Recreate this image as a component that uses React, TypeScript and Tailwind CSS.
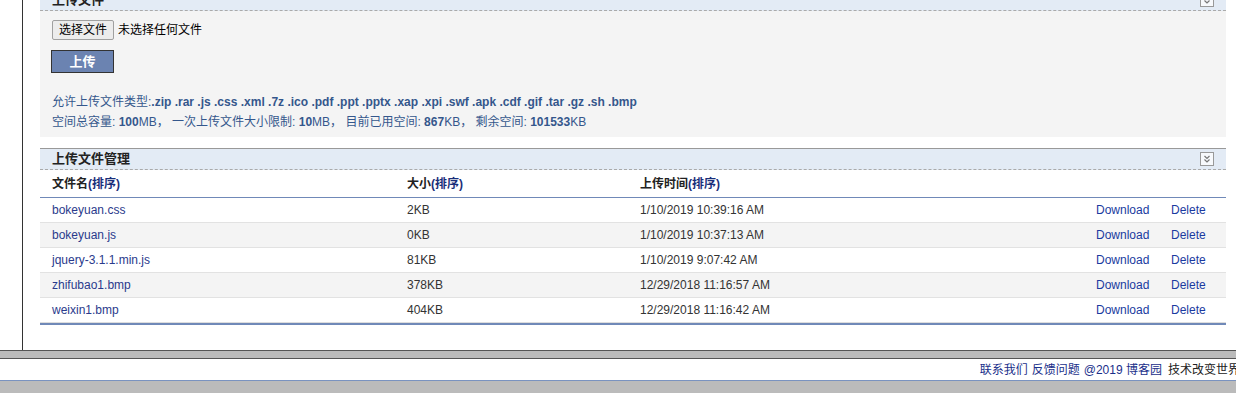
import React from 'react';

const FONT = '"Liberation Sans", Arial, "Noto Sans CJK SC", sans-serif';

const files = [
  { name: 'bokeyuan.css', size: '2KB', time: '1/10/2019 10:39:16 AM' },
  { name: 'bokeyuan.js', size: '0KB', time: '1/10/2019 10:37:13 AM' },
  { name: 'jquery-3.1.1.min.js', size: '81KB', time: '1/10/2019 9:07:42 AM' },
  { name: 'zhifubao1.bmp', size: '378KB', time: '12/29/2018 11:16:57 AM' },
  { name: 'weixin1.bmp', size: '404KB', time: '12/29/2018 11:16:42 AM' },
];

function CollapseIcon() {
  return (
    <span className="flex items-center justify-center w-[14px] h-[14px] border border-[#999] bg-[#f7f9fc]">
      <svg width="8" height="8" viewBox="0 0 8 8" fill="none" stroke="#777" strokeWidth="1.2">
        <path d="M1.5 1l2.5 2.5L6.5 1" />
        <path d="M1.5 4.5l2.5 2.5 2.5-2.5" />
      </svg>
    </span>
  );
}

function PanelHeader({ title, top = false }: { title: string; top?: boolean }) {
  return (
    <div
      className={`flex items-center justify-between h-[22px] pl-3 pr-[12px] bg-[#e3ebf5] border-b border-dashed border-[#aaa] ${top ? '' : 'border-t border-t-[#999]'}`}
      style={top ? undefined : { borderTopStyle: 'solid' }}
    >
      <span className="text-[13px] font-bold text-[#222]">{title}</span>
      <CollapseIcon />
    </div>
  );
}

export default function App() {
  return (
    <div className="h-[393px] overflow-hidden bg-white" style={{ fontFamily: FONT }}>
      <div className="flex h-[350px] overflow-hidden">
        <div className="w-[23px] shrink-0 border-r border-[#333]" />
        <div className="w-[1203px] pl-[17px] -mt-[11px]">
          {/* upload panel */}
          <PanelHeader title="上传文件" top />
          <div className="bg-[#f4f4f4] pl-3 pt-[9px] h-[126px]">
            <div className="flex items-center gap-1 h-[20px]">
              <button className="h-[20px] px-[6px] text-[12px] text-black bg-[#ececec] border border-[#a0a0a0] rounded-[2px]">
                选择文件
              </button>
              <span className="text-[12px] text-black">未选择任何文件</span>
            </div>
            <button className="block mt-[10px] -ml-px w-[63px] h-[23px] bg-[#6b83b1] border border-[#333] text-white text-[13px] font-bold">
              上传
            </button>
            <div className="mt-[19px] text-[12px] leading-[20px] text-[#34578c]">
              <div>
                允许上传文件类型:<b>.zip .rar .js .css .xml .7z .ico .pdf .ppt .pptx .xap .xpi .swf .apk .cdf .gif .tar .gz .sh .bmp</b>
              </div>
              <div>
                空间总容量: <b>100</b>MB， 一次上传文件大小限制: <b>10</b>MB， 目前已用空间: <b>867</b>KB， 剩余空间: <b>101533</b>KB
              </div>
            </div>
          </div>

          {/* manage panel */}
          <div className="mt-[11px]">
            <PanelHeader title="上传文件管理" />
            <div className="text-[12px]">
              <div className="grid grid-cols-[355px_233px_456px_75px_1fr] pl-3 h-[28px] items-center border-b border-[#7089b8] font-bold text-[#222]">
                <span>文件名<span className="text-[#1a2f7a]">(排序)</span></span>
                <span>大小<span className="text-[#1a2f7a]">(排序)</span></span>
                <span>上传时间<span className="text-[#1a2f7a]">(排序)</span></span>
                <span />
                <span />
              </div>
              {files.map((f, i) => (
                <div
                  key={f.name}
                  className={`grid grid-cols-[355px_233px_456px_75px_1fr] pl-3 h-[25px] items-center border-b ${i === files.length - 1 ? 'border-[#ddd]' : 'border-[#e2e2e2]'} ${i % 2 === 1 ? 'bg-[#f4f4f4]' : 'bg-white'}`}
                >
                  <span className="text-[#2a3a8c]">{f.name}</span>
                  <span className="text-[#333]">{f.size}</span>
                  <span className="text-[#333]">{f.time}</span>
                  <span className="text-[#1a3aa0]">Download</span>
                  <span className="text-[#1a3aa0]">Delete</span>
                </div>
              ))}
              <div className="h-[2px] bg-[#7089b8]" />
            </div>
          </div>
        </div>
      </div>

      {/* footer */}
      <div className="h-[9px] bg-[#bbb] border-t border-b border-[#555]" />
      <div className="h-[21px] flex items-center justify-end whitespace-nowrap text-[12px] -mr-[4px]">
        <span className="text-[#1a2f8a]">联系我们</span>
        <span className="ml-[4px] text-[#1a2f8a]">反馈问题</span>
        <span className="ml-[4px] text-[#1a2f8a]">@2019 博客园</span>
        <span className="ml-[6px] text-[#222]">技术改变世界</span>
      </div>
      <div className="h-[13px] bg-[#bbb] border-t border-[#7a93c0]" />
    </div>
  );
}
